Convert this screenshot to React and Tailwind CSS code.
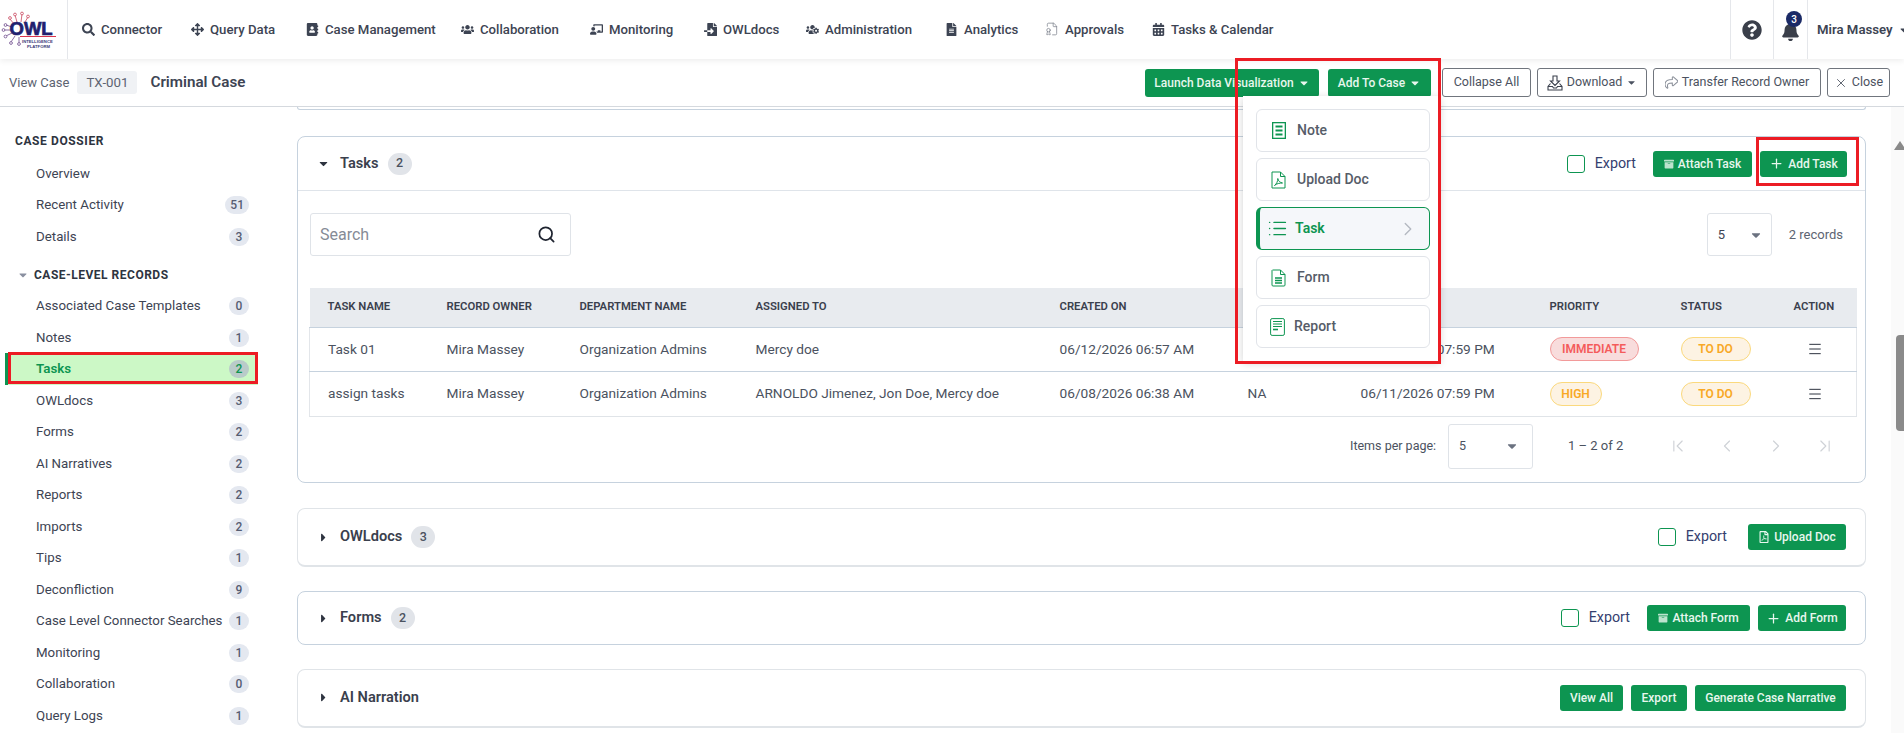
import React from 'react';
import {
    FaSearch, FaArrowsAlt, FaAddressBook, FaUsers, FaChalkboardTeacher, FaFileImport, FaUsersCog,
    FaFileAlt, FaCalendarAlt, FaQuestionCircle, FaBell, FaCaretDown, FaCaretRight,
    FaArchive, FaRegFilePdf, FaShare,
} from 'react-icons/fa';
import { Search, Plus, X, ChevronRight, ChevronLeft, ChevronFirst, ChevronLast, List, Menu, FileBadge } from 'lucide-react';

const navItems = [
    { label: 'Connector', icon: FaSearch, w: 'w-[109px]' },
    { label: 'Query Data', icon: FaArrowsAlt, w: 'w-[115px]' },
    { label: 'Case Management', icon: FaAddressBook, w: 'w-[155px]' },
    { label: 'Collaboration', icon: FaUsers, w: 'w-[129px]' },
    { label: 'Monitoring', icon: FaChalkboardTeacher, w: 'w-[114px]' },
    { label: 'OWLdocs', icon: FaFileImport, w: 'w-[102px]' },
    { label: 'Administration', icon: FaUsersCog, w: 'w-[139px]' },
    { label: 'Analytics', icon: FaFileAlt, w: 'w-[100px]' },
    { label: 'Approvals', icon: FileBadge, w: 'w-[107px]', light: true },
    { label: 'Tasks & Calendar', icon: FaCalendarAlt, w: 'w-auto' },
];

const dossier = [
    { label: 'Overview' },
    { label: 'Recent Activity', count: 51 },
    { label: 'Details', count: 3 },
];

const records = [
    { label: 'Associated Case Templates', count: 0 },
    { label: 'Notes', count: 1 },
    { label: 'Tasks', count: 2, active: true },
    { label: 'OWLdocs', count: 3 },
    { label: 'Forms', count: 2 },
    { label: 'AI Narratives', count: 2 },
    { label: 'Reports', count: 2 },
    { label: 'Imports', count: 2 },
    { label: 'Tips', count: 1 },
    { label: 'Deconfliction', count: 9 },
    { label: 'Case Level Connector Searches', count: 1 },
    { label: 'Monitoring', count: 1 },
    { label: 'Collaboration', count: 0 },
    { label: 'Query Logs', count: 1 },
];

const Logo = () => (
    <svg width="68" height="59" viewBox="0 0 68 59" className="shrink-0">
        <g fill="none" stroke="#c9485f" strokeWidth="0.8">
            <path d="M14 24 L10 19 M17 22 L15 15 M21 22 L22 14 M25 22 L28 17" />
        </g>
        <g fill="none" stroke="#6d4a8c" strokeWidth="0.8">
            <path d="M12 27 L6 25 M11 30 L4 30 M12 33 L6 36 M15 36 L11 42 M19 37 L19 43" />
        </g>
        <g fill="#fff" stroke="#c9485f" strokeWidth="0.8">
            <circle cx="10" cy="18" r="1.4" />
            <circle cx="15" cy="14.5" r="1.4" />
            <circle cx="22" cy="13.5" r="1.4" />
            <circle cx="28" cy="16.5" r="1.4" />
        </g>
        <g fill="#fff" stroke="#6d4a8c" strokeWidth="0.8">
            <circle cx="5.5" cy="25" r="1.4" />
            <circle cx="3.5" cy="30" r="1.4" />
            <circle cx="5.5" cy="36.5" r="1.4" />
            <circle cx="11" cy="43" r="1.4" />
            <circle cx="19" cy="44" r="1.4" />
        </g>
        <text x="9.5" y="35" fontFamily="'Liberation Sans', sans-serif" fontWeight="700" fontSize="18.5" fill="#221f6e" stroke="#221f6e" strokeWidth="0.7">OWL</text>
        <path d="M20 36.5 H56" stroke="#d8344d" strokeWidth="1" />
        <text x="22" y="43" fontFamily="'Liberation Sans', sans-serif" fontWeight="700" fontSize="4.2" fill="#3a3a7a">INTELLIGENCE</text>
        <text x="27" y="47.5" fontFamily="'Liberation Sans', sans-serif" fontWeight="700" fontSize="4.2" fill="#3a3a7a">PLATFORM</text>
    </svg>
);

const NoteIcon = () => (
    <svg width="14" height="17" viewBox="0 0 14 17">
        <rect x="0.5" y="0.5" width="13" height="16" fill="#fff" stroke="#0d9551" strokeWidth="1.6" />
        <path d="M3.5 4.5H10.5M3.5 8.5H10.5M3.5 12.5H10.5" stroke="#0d9551" strokeWidth="1.8" />
    </svg>
);

const UploadIcon = () => (
    <svg width="15" height="18" viewBox="0 0 15 18" fill="none" stroke="#0d9551" strokeWidth="1">
        <path d="M1 1H9.5L14 5.5V17H1Z" />
        <path d="M9.5 1V5.5H14" />
        <path d="M3.5 14.5C5.5 13 7 10 6.8 7.5C7.2 10 9 11.5 11.5 12C9 12 5.5 12.5 3.5 14.5Z" />
    </svg>
);

const FormIcon = () => (
    <svg width="15" height="18" viewBox="0 0 15 18" fill="none" stroke="#0d9551">
        <path d="M1.5 1H9.5L14 5.5V16A1 1 0 0 1 13 17H2A1 1 0 0 1 1 16V1.5Z" />
        <path d="M9.5 1V5.5H14" />
        <path d="M4 9H11M4 11.5H11M4 14H11" strokeWidth="1.3" />
    </svg>
);

const ReportIcon = () => (
    <svg width="15" height="18" viewBox="0 0 15 18" fill="none" stroke="#0d9551">
        <rect x="0.6" y="0.6" width="13.8" height="16.8" rx="1.5" />
        <path d="M3 3.5H12M3 6H12M3 8.5H12" strokeWidth="1.2" />
        <path d="M3 11.5H8" strokeWidth="1.6" />
    </svg>
);

const TrayIcon = () => (
    <svg width="16" height="16" viewBox="0 0 16 16" fill="none" stroke="#3a404d" strokeWidth="1.1">
        <path d="M3.5 8.5L1 11.5V15H15V11.5L12.5 8.5" />
        <path d="M1 11.5H5.5L6.5 13H9.5L10.5 11.5H15" />
        <path d="M6 1H10V6H12.5L8 10.5L3.5 6H6Z" />
    </svg>
);

const Count = ({ value, active }) => (
    <span className={`min-w-[20px] h-[18px] px-[5px] flex items-center justify-center rounded-full text-[12px] font-medium ${active ? 'bg-[#b9cbc9] text-[#0d9551]' : 'bg-[#e4e8f0] text-[#565d72]'}`}>
        {value}
    </span>
);

const SideRow = ({ item }) => (
    <div className={`h-[31.5px] flex items-center justify-between pl-[28px] pr-[9px] ml-[8px] w-[250px] text-[13.3px] ${item.active ? 'bg-[#ccf8c6] text-[#0d9551] font-semibold' : 'text-[#3d4453]'}`}>
        <span>{item.label}</span>
        {item.count !== undefined && <Count value={item.count} active={item.active} />}
    </div>
);

const GreenButton = ({ children, className = '' }) => (
    <button className={`h-[26px] flex items-center justify-center gap-[4px] bg-[#0d9551] text-[#e8f7ee] rounded-[3px] text-[12px] font-medium whitespace-nowrap ${className}`}>
        {children}
    </button>
);

const OutlineButton = ({ children, className = '' }) => (
    <button className={`h-[29px] flex items-center justify-center gap-[4px] bg-white border border-[#70757d] rounded-[3px] text-[12.5px] text-[#4b5260] whitespace-nowrap ${className}`}>
        {children}
    </button>
);

const ExportCheck = ({ className = 'mr-[9px]' }) => (
    <div className={`flex items-center gap-[10px] ${className}`}>
        <span className="w-[18px] h-[18px] border border-[#0d9551] rounded-[3px] bg-white" />
        <span className="text-[14.3px] text-[#34406f]">Export</span>
    </div>
);

const Pill = ({ children, tone, className = '' }) => (
    <span className={`h-[24px] inline-flex items-center justify-center rounded-full border text-[12px] font-semibold ${tone === 'red' ? 'bg-[#f8dcdc] border-[#f29a9a] text-[#f45b5b]' : 'bg-[#fdf3e3] border-[#fbd97d] text-[#f8a825]'} ${className}`}>
        {children}
    </span>
);

const CardHeader = ({ open, title, count, h, children }) => (
    <div className={`flex items-center justify-between pl-[19px] pr-[19px] ${h}`}>
        <div className="flex items-center">
            {open ? <FaCaretDown className="w-[13px] h-[13px] text-[#2e3440]" /> : <FaCaretRight className="w-[13px] h-[13px] text-[#2e3440]" />}
            <span className="ml-[10px] text-[14.6px] font-semibold text-[#3a404d]">{title}</span>
            {count !== undefined && (
                <span className="ml-[9px] w-[24px] h-[22px] rounded-full bg-[#e1e4e9] flex items-center justify-center text-[12.5px] font-medium text-[#4b5260]">{count}</span>
            )}
        </div>
        <div className="flex items-center gap-[8px]">{children}</div>
    </div>
);

const rows = [
    { name: 'Task 01', to: 'Mercy doe', created: '06/12/2026 06:57 AM', closed: 'NA', due: '06/11/2026 07:59 PM', priority: 'IMMEDIATE' },
    { name: 'assign tasks', to: 'ARNOLDO Jimenez, Jon Doe, Mercy doe', created: '06/08/2026 06:38 AM', closed: 'NA', due: '06/11/2026 07:59 PM', priority: 'HIGH' },
];

const headers = [
    ['TASK NAME', 'w-[137px] pl-[18px]'],
    ['RECORD OWNER', 'w-[133px]'],
    ['DEPARTMENT NAME', 'w-[176px]'],
    ['ASSIGNED TO', 'w-[304px]'],
    ['CREATED ON', 'w-[188px]'],
    ['CLOSED ON', 'w-[113px]'],
    ['DUE DATE', 'w-[189px]'],
    ['PRIORITY', 'w-[131px]'],
    ['STATUS', 'w-[113px]'],
    ['ACTION', ''],
];

const TasksTable = () => (
    <table className="mt-[32px] ml-[11px] w-[1548px] table-fixed border-collapse">
        <thead>
            <tr className="h-[39px] bg-[#e8ebef] border-b border-[#c6d2de]">
                {headers.map(([label, cls]) => (
                    <th key={label} className={`text-left text-[11.3px] font-semibold text-[#3a404d] ${cls}`}>{label}</th>
                ))}
            </tr>
        </thead>
        <tbody className="text-[13.7px] text-[#4b5260]">
            {rows.map((r, i) => (
                <tr key={r.name} className={`h-[44.5px] border-x border-[#e3e6ea] ${i === 0 ? 'border-b border-b-[#c6d2de]' : 'border-b border-b-[#e0e4e8]'}`}>
                    <td className="pl-[18px]">{r.name}</td>
                    <td>Mira Massey</td>
                    <td>Organization Admins</td>
                    <td>{r.to}</td>
                    <td>{r.created}</td>
                    <td>{r.closed}</td>
                    <td>{r.due}</td>
                    <td>
                        <Pill tone={r.priority === 'HIGH' ? 'amber' : 'red'} className={r.priority === 'HIGH' ? 'w-[52px]' : 'w-[89px]'}>{r.priority}</Pill>
                    </td>
                    <td><Pill className="w-[70px]">TO DO</Pill></td>
                    <td><Menu className="w-[16px] h-[16px] ml-[13px] text-[#2e3440]" strokeWidth={1.5} /></td>
                </tr>
            ))}
        </tbody>
    </table>
);

const Paginator = () => (
    <div className="mt-[7px] h-[45px] flex items-center text-[12.5px] text-[#4b5260]">
        <span className="ml-[1052px] w-[98px]">Items per page:</span>
        <div className="w-[85px] h-[45px] border border-[#dfe3e8] rounded-[3px] flex items-center justify-between pl-[10px] pr-[13px]">
            <span>5</span>
            <FaCaretDown className="w-[14px] h-[14px] text-[#6b7280]" />
        </div>
        <span className="ml-[35px] w-[100px] text-[13px]">1 – 2 of 2</span>
        <div className="flex items-center gap-[29px] text-[#cfd2d7]">
            <ChevronFirst className="w-[20px] h-[20px]" strokeWidth={1.4} />
            <ChevronLeft className="w-[20px] h-[20px]" strokeWidth={1.4} />
            <ChevronRight className="w-[20px] h-[20px]" strokeWidth={1.4} />
            <ChevronLast className="w-[20px] h-[20px]" strokeWidth={1.4} />
        </div>
    </div>
);

const MenuItem = ({ icon, label, active, report }) => (
    <div className={`h-[43px] flex items-center rounded-[6px] border text-[14px] font-medium ${active ? 'border-[#0d9551] border-l-4 bg-[#f5f7fa] text-[#0d9551] font-semibold' : 'border-[#e1e4e9] text-[#565c68]'}`}>
        <span className={`flex justify-center ${report ? 'w-[33px] pl-[7px]' : active ? 'w-[34px]' : 'w-[40px] pl-[3px]'}`}>{icon}</span>
        <span className={report ? 'ml-[4px]' : active ? 'ml-[1px]' : ''}>{label}</span>
        {active && <ChevronRight className="ml-auto mr-[10px] w-[22px] h-[22px] text-[#b4b9c1]" strokeWidth={1.5} />}
    </div>
);

const App = () => {
    return (
        <div className="relative w-[1904px] h-[733px] overflow-hidden bg-white font-['Roboto',sans-serif]">
            <header className="relative z-10 h-[59px] flex items-center bg-white shadow-[0_2px_6px_rgba(0,0,0,0.07)]">
                <div className="w-[68px] h-[59px] flex items-center justify-center border-r border-[#e5e7eb]">
                    <Logo />
                </div>
                <nav className="flex items-center pl-[14px] text-[13.2px] font-medium text-[#3d4453]">
                    {navItems.map(({ label, icon: Icon, w, light }) => (
                        <div key={label} className={`flex items-center gap-[6px] whitespace-nowrap ${w}`}>
                            {light
                                ? <Icon className="w-[14px] h-[14px] text-[#7d838e] shrink-0" strokeWidth={1.3} />
                                : <Icon className="w-[13px] h-[13px] text-[#3d4453] shrink-0" />}
                            {label}
                        </div>
                    ))}
                </nav>
                <div className="ml-auto flex h-[59px] items-center">
                    <div className="w-[43px] h-full flex items-center justify-center border-l border-[#e5e7eb]">
                        <FaQuestionCircle className="w-[20px] h-[20px] text-[#3a3f4a]" />
                    </div>
                    <div className="relative w-[34px] h-full flex items-center justify-center border-l border-[#e5e7eb]">
                        <FaBell className="w-[17px] h-[19px] mt-[3px] text-[#3a3f4a]" />
                        <span className="absolute top-[11px] left-[12px] w-[16px] h-[16px] rounded-full bg-[#1b2a66] text-white text-[10px] font-medium flex items-center justify-center">3</span>
                    </div>
                    <div className="w-[97px] h-full flex items-center border-l border-[#e5e7eb] pl-[9px] text-[13.2px] font-semibold text-[#3d4453] whitespace-nowrap">
                        Mira Massey
                        <FaCaretDown className="w-[12px] h-[12px] ml-[5px] shrink-0" />
                    </div>
                </div>
            </header>

            <div className="h-[48px] flex items-center border-b border-[#d5d9de] pl-[9px]">
                <span className="text-[13px] text-[#5d6472]">View Case</span>
                <span className="ml-[8px] h-[23px] w-[60px] bg-[#f0f2f5] rounded-[3px] flex items-center justify-center text-[13.3px] text-[#5d6472]">TX-001</span>
                <span className="ml-[13px] text-[15.2px] font-semibold text-[#3d4453]">Criminal Case</span>
                <div className="ml-auto flex items-center pr-[14px]">
                    <GreenButton className="w-[174px] h-[28px] text-[12.5px]">Launch Data Visualization <FaCaretDown className="w-[12px] h-[12px]" /></GreenButton>
                    <GreenButton className="w-[103px] h-[28px] ml-[9px] text-[12.5px]">Add To Case <FaCaretDown className="w-[12px] h-[12px]" /></GreenButton>
                    <OutlineButton className="w-[89px] ml-[11px]">Collapse All</OutlineButton>
                    <OutlineButton className="w-[110px] ml-[6px]"><TrayIcon />Download <FaCaretDown className="w-[11px] h-[11px]" /></OutlineButton>
                    <OutlineButton className="w-[168px] ml-[6px]"><FaShare className="w-[13px] h-[13px] fill-none stroke-[#8b909a] stroke-[40]" />Transfer Record Owner</OutlineButton>
                    <OutlineButton className="w-[63px] ml-[6px]"><X className="w-[14px] h-[14px]" strokeWidth={1.5} />Close</OutlineButton>
                </div>
            </div>

            <div className="flex h-[626px]">
                <aside className="w-[297px] shrink-0 pt-[25px]">
                    <div className="pl-[15px] text-[12px] font-bold tracking-[0.6px] text-[#2e3440] h-[18px] flex items-center">CASE DOSSIER</div>
                    <div className="mt-[8px]">
                        {dossier.map((d) => <SideRow key={d.label} item={d} />)}
                    </div>
                    <div className="mt-[13px] pl-[17px] h-[18px] flex items-center text-[12px] font-bold tracking-[0.5px] text-[#2e3440]">
                        <FaCaretDown className="w-[12px] h-[12px] text-[#8a90a0] mr-[5px]" />
                        CASE-LEVEL RECORDS
                    </div>
                    <div className="mt-[7px]">
                        {records.map((r) => <SideRow key={r.label} item={r} />)}
                    </div>
                </aside>

                <main className="w-[1569px] shrink-0">
                    <div className="h-[3px] border-x border-b border-[#c6d2de] rounded-b-[6px]" />

                    <section className="mt-[26px] h-[347px] border border-[#c6d2de] rounded-[8px]">
                        <div className="border-b border-[#dfe4ea]">
                            <CardHeader open title="Tasks" count={2} h="h-[53px]">
                                <ExportCheck />
                                <GreenButton className="w-[99px]"><FaArchive className="w-[10px] h-[10px] opacity-80" />Attach Task</GreenButton>
                                <GreenButton className="w-[87px] mr-[-1px]"><Plus className="w-[15px] h-[15px]" />Add Task</GreenButton>
                            </CardHeader>
                        </div>
                        <div className="mt-[22px] flex items-center px-[12px]">
                            <div className="w-[261px] h-[43px] border border-[#dfe3e8] rounded-[3px] flex items-center justify-between pl-[9px] pr-[14px]">
                                <span className="text-[16px] text-[#858b96]">Search</span>
                                <Search className="w-[19px] h-[19px] text-[#1f2430]" strokeWidth={2.2} />
                            </div>
                            <div className="ml-auto w-[65px] h-[43px] border border-[#dfe3e8] rounded-[3px] flex items-center justify-between pl-[10px] pr-[8px] text-[13px] text-[#3d4453]">
                                <span>5</span>
                                <FaCaretDown className="w-[14px] h-[14px] text-[#6b7280]" />
                            </div>
                            <span className="ml-[17px] mr-[10px] text-[13px] text-[#5d6472]">2 records</span>
                        </div>
                        <TasksTable />
                        <Paginator />
                    </section>

                    <section className="mt-[25px] border border-[#e0e4e8] border-b-2 rounded-[8px]">
                        <CardHeader title="OWLdocs" count={3} h="h-[56px]">
                            <ExportCheck className="mr-[13px]" />
                            <GreenButton className="w-[98px]"><FaRegFilePdf className="w-[12px] h-[12px]" />Upload Doc</GreenButton>
                        </CardHeader>
                    </section>

                    <section className="mt-[24px] border border-[#c6d2de] rounded-[8px]">
                        <CardHeader title="Forms" count={2} h="h-[52px]">
                            <ExportCheck />
                            <GreenButton className="w-[103px]"><FaArchive className="w-[10px] h-[10px] opacity-80" />Attach Form</GreenButton>
                            <GreenButton className="w-[88px]"><Plus className="w-[15px] h-[15px]" />Add Form</GreenButton>
                        </CardHeader>
                    </section>

                    <section className="mt-[24px] border border-[#e0e4e8] border-b-2 rounded-[8px]">
                        <CardHeader title="AI Narration" h="h-[56px]">
                            <GreenButton className="w-[63px]">View All</GreenButton>
                            <GreenButton className="w-[56px]">Export</GreenButton>
                            <GreenButton className="w-[151px]">Generate Case Narrative</GreenButton>
                        </CardHeader>
                    </section>
                </main>

                <div className="relative ml-auto w-[13px] h-full bg-[#fafafa]">
                    <span className="absolute top-[34px] left-[3px] w-0 h-0 border-x-[6px] border-x-transparent border-b-[9px] border-b-[#8a8a8a]" />
                    <span className="absolute top-[228px] left-[5px] w-[8px] h-[96px] rounded-l-[4px] bg-[#8a8a8a]" />
                </div>
            </div>

            {/* dropdown and the red review marks lie over the page */}
            <div className="absolute z-20 left-[1243px] top-[96px] w-[197px] h-[265px] bg-white shadow-[0_2px_8px_rgba(0,0,0,0.18)] pl-[13px] pr-[10px] pt-[13px] flex flex-col gap-[6px]">
                <MenuItem icon={<NoteIcon />} label="Note" />
                <MenuItem icon={<UploadIcon />} label="Upload Doc" />
                <MenuItem active icon={<List className="w-[21px] h-[21px] text-[#0d9551]" strokeWidth={1.7} />} label="Task" />
                <MenuItem icon={<FormIcon />} label="Form" />
                <MenuItem report icon={<ReportIcon />} label="Report" />
            </div>
            <div className="absolute z-30 left-[1235px] top-[58px] w-[206px] h-[306px] border-[3px] border-[#ec1c24]" />
            <div className="absolute z-30 left-[1756px] top-[137px] w-[103px] h-[49px] border-[3px] border-[#ec1c24]" />
            <div className="absolute z-30 left-[8px] top-[352px] w-[250px] h-[32px] border-[3px] border-[#ec1c24]" />
            <div className="absolute z-20 left-[5px] top-[353px] w-[3px] h-[32px] bg-[#0d9551]" />
        </div>
    );
};

export default App;
